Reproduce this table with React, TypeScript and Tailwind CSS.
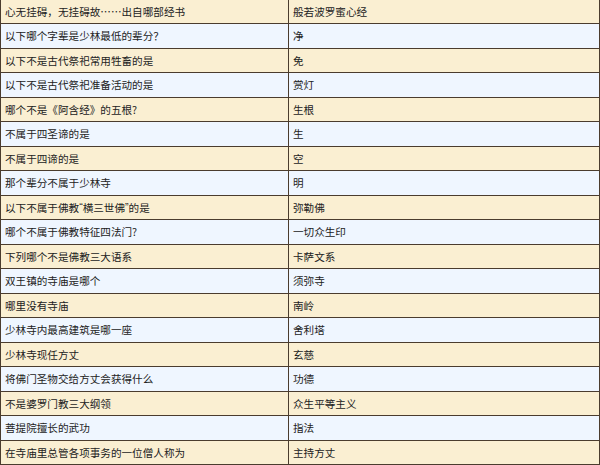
import React from "react";

const Q = ({ c }: { c: string }) => (
  <span style={{ fontFamily: '"Liberation Sans", sans-serif' }}>{c}</span>
);

const rows: [React.ReactNode, string][] = [
  ["心无挂碍，无挂碍故……出自哪部经书", "般若波罗蜜心经"],
  ["以下哪个字辈是少林最低的辈分？", "净"],
  ["以下不是古代祭祀常用牲畜的是", "免"],
  ["以下不是古代祭祀准备活动的是", "赏灯"],
  ["哪个不是《阿含经》的五根?", "生根"],
  ["不属于四圣谛的是", "生"],
  ["不属于四谛的是", "空"],
  ["那个辈分不属于少林寺", "明"],
  [
    <>
      以下不属于佛教<Q c="“" />横三世佛<Q c="”" />的是
    </>,
    "弥勒佛",
  ],
  ["哪个不属于佛教特征四法门?", "一切众生印"],
  ["下列哪个不是佛教三大语系", "卡萨文系"],
  ["双王镇的寺庙是哪个", "须弥寺"],
  ["哪里没有寺庙", "南岭"],
  ["少林寺内最高建筑是哪一座", "舍利塔"],
  ["少林寺现任方丈", "玄慈"],
  ["将佛门圣物交给方丈会获得什么", "功德"],
  ["不是婆罗门教三大纲领", "众生平等主义"],
  ["菩提院擅长的武功", "指法"],
  ["在寺庙里总管各项事务的一位僧人称为", "主持方丈"],
];

export default function App() {
  return (
    <div
      className="w-[600px] h-[465px] overflow-hidden bg-white text-[#222] text-[10.6px]"
      style={{ fontFamily: '"Noto Sans CJK SC", "Noto Sans", sans-serif' }}
    >
      <div className="flex flex-col border-l border-r border-[#4a3c2e]">
        {rows.map(([q, a], i) => (
          <div
            key={i}
            className={
              (i % 2 === 0 ? "bg-[#faefd2] h-[24px]" : "bg-[#eff6ff] h-[25px]") +
              " flex border-b border-[#4a3c2e]"
            }
          >
            <div className="w-[288px] shrink-0 flex items-center pl-[4px] border-r border-[#4a3c2e] whitespace-nowrap">
              {q}
            </div>
            <div className="flex-1 flex items-center pl-[4px] whitespace-nowrap">{a}</div>
          </div>
        ))}
      </div>
    </div>
  );
}
